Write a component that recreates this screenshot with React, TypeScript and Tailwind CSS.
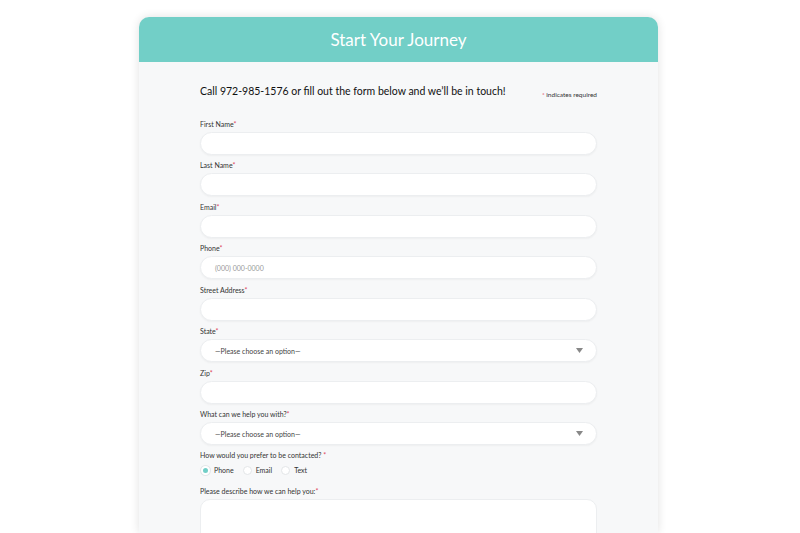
const fields = [
  { label: 'First Name' },
  { label: 'Last Name' },
  { label: 'Email' },
  { label: 'Phone', placeholder: '(000) 000-0000' },
  { label: 'Street Address' },
  { label: 'State', select: true },
  { label: 'Zip' },
  { label: 'What can we help you with?', select: true },
];

const Req = () => <span className="text-[#e0445a]">*</span>;

const inputBox =
  'flex h-[23px] items-center justify-between rounded-full border border-[#eceef0] bg-white px-[14px] shadow-[0_1px_2px_rgba(0,0,0,0.04)]';

const Radio = ({ label, checked }: { label: string; checked?: boolean }) => (
  <div className="flex items-center gap-[4px]">
    <span
      className={
        checked
          ? 'h-[9px] w-[9px] rounded-full border-2 border-white bg-[#72cfc7] shadow-[0_0_0_1px_#e3e6e8]'
          : 'h-[9px] w-[9px] rounded-full border border-[#e3e6e8] bg-white'
      }
    />
    <span className="text-[7px] text-[#333]">{label}</span>
  </div>
);

const App = () => {
  return (
    <div className="flex h-[533px] justify-center overflow-hidden bg-white pt-[17px] font-['Lato',sans-serif]">
      <div className="-ml-[3px] w-[519px] rounded-t-[10px] bg-[#f7f8f9] shadow-[0_0_10px_rgba(0,0,0,0.12)]">
        <div className="flex h-[45px] items-center justify-center rounded-t-[10px] bg-[#72cfc7]">
          <h1 className="text-[17px] text-white">Start Your Journey</h1>
        </div>
        <div className="px-[61px] pt-[22px]">
          <div className="flex items-start justify-between">
            <p className="text-[10.5px] text-[#111]">Call 972-985-1576 or fill out the form below and we’ll be in touch!</p>
            <p className="mt-[6px] text-[6.5px] text-[#333]">
              <Req /> indicates required
            </p>
          </div>
          <div className="mt-[20px] flex flex-col gap-[6.5px]">
            {fields.map((f) => (
              <div key={f.label} className="flex flex-col gap-[3px]">
                <label className="text-[7px] leading-[9px] text-[#333]">
                  {f.label}
                  <Req />
                </label>
                <div className={inputBox}>
                  {f.select ? (
                    <>
                      <span className="text-[7px] text-[#444]">—Please choose an option—</span>
                      <svg width="7" height="5" viewBox="0 0 7 5" className="mr-[-1px]">
                        <path d="M0 0h7L3.5 5z" fill="#888" />
                      </svg>
                    </>
                  ) : (
                    <span className="text-[7px] text-[#999]">{f.placeholder}</span>
                  )}
                </div>
              </div>
            ))}
            <div className="-mt-[1px] flex flex-col gap-[5px]">
              <label className="text-[7px] leading-[9px] text-[#333]">
                How would you prefer to be contacted? <Req />
              </label>
              <div className="flex items-center gap-[9px] pl-[1px]">
                <Radio label="Phone" checked />
                <Radio label="Email" />
                <Radio label="Text" />
              </div>
            </div>
            <div className="mt-[5px] flex flex-col gap-[3px]">
              <label className="text-[7px] leading-[9px] text-[#333]">
                Please describe how we can help you:
                <Req />
              </label>
              <div className="h-[60px] rounded-t-[10px] border border-[#eceef0] bg-white" />
            </div>
          </div>
        </div>
      </div>
    </div>
  );
};

export default App;
